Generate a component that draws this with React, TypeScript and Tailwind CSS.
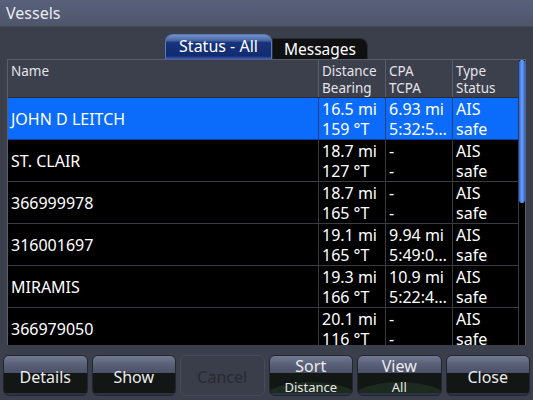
import React from "react";

type Row = { name: string; d: [string, string]; c: [string, string]; t: [string, string]; sel?: boolean };

const rows: Row[] = [
  { name: "JOHN D LEITCH", d: ["16.5 mi", "159 °T"], c: ["6.93 mi", "5:32:5…"], t: ["AIS", "safe"], sel: true },
  { name: "ST. CLAIR", d: ["18.7 mi", "127 °T"], c: ["-", "-"], t: ["AIS", "safe"] },
  { name: "366999978", d: ["18.7 mi", "165 °T"], c: ["-", "-"], t: ["AIS", "safe"] },
  { name: "316001697", d: ["19.1 mi", "165 °T"], c: ["9.94 mi", "5:49:0…"], t: ["AIS", "safe"] },
  { name: "MIRAMIS", d: ["19.3 mi", "166 °T"], c: ["10.9 mi", "5:22:4…"], t: ["AIS", "safe"] },
  { name: "366979050", d: ["20.1 mi", "116 °T"], c: ["-", "-"], t: ["AIS", "safe"] },
];

function Two({ v, sel }: { v: [string, string]; sel?: boolean }) {
  return (
    <div
      className={`flex flex-col justify-center px-[3px] leading-[20px] whitespace-nowrap overflow-hidden border-l ${
        sel ? "border-[#1d3f7a]" : "border-[#3a3b40]"
      }`}
    >
      <span>{v[0]}</span>
      <span>{v[1]}</span>
    </div>
  );
}

function Btn({ label, sub, disabled }: { label: string; sub?: string; disabled?: boolean }) {
  if (disabled) {
    return (
      <div className="flex-1 h-[41px] rounded-[6px] border border-[#474b59] bg-[#3a3d4a] flex items-center justify-center pt-[2px] text-[16px] text-[#272a33]">
        {label}
      </div>
    );
  }
  return (
    <div className="relative flex-1 h-[41px] rounded-[6px] border border-[#23262f] overflow-hidden flex flex-col">
      <div className="h-[17px] bg-[linear-gradient(#727a92,#596077_50%,#4a5066)]" />
      <div className="relative flex-1 bg-[#121614] border-b-2 border-[#2e3345] overflow-hidden">
        {sub && (
          <div className="absolute left-[-12px] right-[-12px] top-[9px] h-[44px] rounded-[50%] bg-[#1c2a20]" />
        )}
      </div>
      {sub ? (
        <div className="absolute inset-0 flex flex-col items-center">
          <span className="text-[16px] leading-[20px] mt-[0px] text-[#ececec]">{label}</span>
          <span className="text-[13px] leading-[16px] mt-[3px] text-[#e6e6e6]">{sub}</span>
        </div>
      ) : (
        <div className="absolute inset-0 flex items-center justify-center pt-[2px] text-[16px] text-[#ececec]">
          {label}
        </div>
      )}
    </div>
  );
}

export default function App() {
  return (
    <div
      className="w-[533px] h-[400px] overflow-hidden bg-[#3b3e4b] flex flex-col text-white"
      style={{ fontFamily: '"Noto Sans", "DejaVu Sans", sans-serif' }}
    >
      {/* Title bar */}
      <div className="h-[27px] shrink-0 bg-[linear-gradient(#58607a,#4f566c)] border-b border-[#434857] flex items-center pl-[6px] text-[16px] text-[#ebebf0]">
        Vessels
      </div>

      {/* Tabs */}
      <div className="h-[32px] shrink-0 flex justify-center items-end">
        <div className="w-[107px] h-[25px] rounded-t-[8px] border border-[#5c7ab8] border-b-0 bg-[linear-gradient(#7391c7,#4a68a6_22%,#18337d_32%,#122b70_88%,#3a62d0)] flex items-center justify-center text-[16px] text-white leading-none pb-[2px]">
          Status - All
        </div>
        <div className="w-[96px] h-[21px] rounded-tr-[8px] bg-[#0e1012] border border-[#2a2c33] border-b-0 flex items-center justify-center text-[15.5px] text-white leading-none pt-[1px]">
          Messages
        </div>
      </div>

      {/* Table */}
      <div className="ml-[7px] w-[519px] h-[286px] shrink-0 border border-[#5a5d6a] border-b-0 flex overflow-hidden">
        <div className="w-[510px] flex flex-col">
          <div className="h-[38px] shrink-0 grid grid-cols-[310px_67px_67px_66px] bg-[#3c3f4c] border-b border-[#2a2c34] text-[13.5px] leading-[17px] text-[#e4e4ea]">
            <div className="pl-[3px] pt-[3px]">Name</div>
            <div className="pl-[3px] pt-[3px] border-l border-[#5a5d6a]">
              Distance
              <br />
              Bearing
            </div>
            <div className="pl-[3px] pt-[3px] border-l border-[#5a5d6a]">
              CPA
              <br />
              TCPA
            </div>
            <div className="pl-[3px] pt-[3px] border-l border-[#5a5d6a]">
              Type
              <br />
              Status
            </div>
          </div>
          {rows.map((r) => (
            <div
              key={r.name}
              className={`h-[42px] shrink-0 grid grid-cols-[310px_67px_67px_66px] border-b text-[16px] ${
                r.sel ? "bg-[#0b6cfb] border-[#0b3f9a]" : "bg-black border-[#3a3b40]"
              }`}
            >
              <div className="flex items-center pl-[3px] whitespace-nowrap">{r.name}</div>
              <Two v={r.d} sel={r.sel} />
              <Two v={r.c} sel={r.sel} />
              <Two v={r.t} sel={r.sel} />
            </div>
          ))}
        </div>
        <div className="w-[8px] bg-black border-l border-[#3a3b40] flex flex-col">
          <div className="h-[143px] w-[6px] rounded-b-[4px] rounded-t-[3px] bg-[linear-gradient(90deg,#2a63d8,#6aa2ff_50%,#2a63d8)]" />
        </div>
      </div>

      {/* Buttons */}
      <div className="mt-[10px] px-[3px] flex gap-[4px] w-[533px]">
        <Btn label="Details" />
        <Btn label="Show" />
        <Btn label="Cancel" disabled />
        <Btn label="Sort" sub="Distance" />
        <Btn label="View" sub="All" />
        <Btn label="Close" />
      </div>
    </div>
  );
}
